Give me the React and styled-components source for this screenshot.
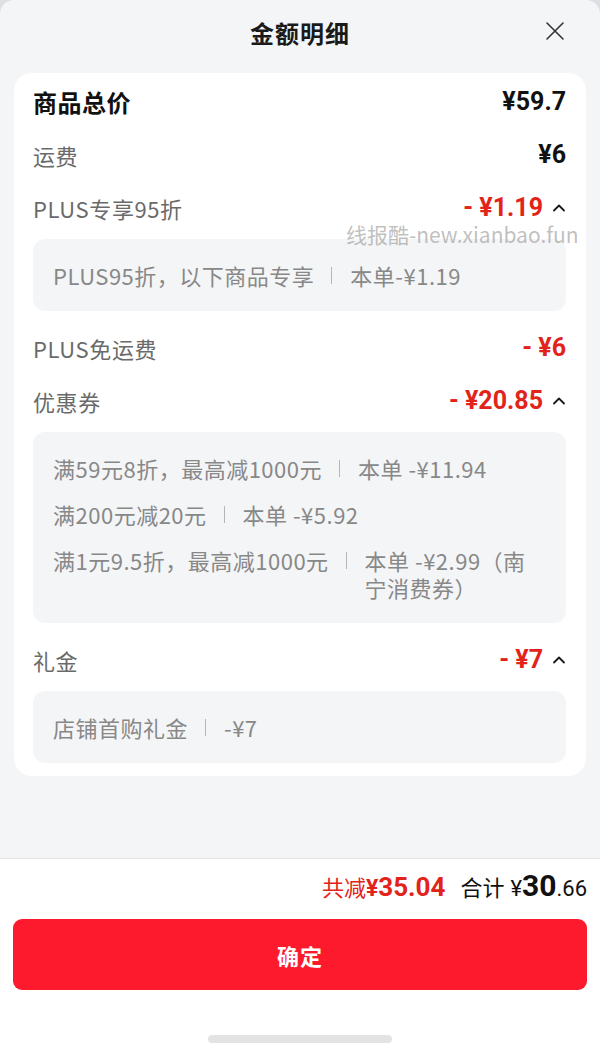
import React from "react";
import styled, { createGlobalStyle } from "styled-components";

const GlobalStyle = createGlobalStyle`
  html, body {
    margin: 0;
    padding: 0;
    background: #dedfe3;
  }
  * {
    box-sizing: border-box;
  }
`;

const CN = `"Noto Sans CJK SC", "Noto Sans", sans-serif`;
const NUM = `Roboto, "Noto Sans CJK SC", sans-serif`;

const Sheet = styled.div`
  width: 600px;
  height: 1053px;
  display: flex;
  flex-direction: column;
  background: #f4f5f7;
  border-radius: 14px 14px 0 0;
  overflow: hidden;
  font-family: ${CN};
`;

const Header = styled.div`
  position: relative;
  height: 64px;
  display: flex;
  align-items: center;
  justify-content: center;
  flex-shrink: 0;
`;

const Title = styled.div`
  font-size: 24px;
  font-weight: 700;
  color: #1a1a1a;
  letter-spacing: 1px;
`;

const Close = styled.button`
  position: absolute;
  right: 34px;
  top: 20px;
  width: 22px;
  height: 22px;
  padding: 0;
  border: none;
  background: none;
  cursor: pointer;
`;

const Body = styled.div`
  flex: 1;
  padding: 9px 14px 0;
`;

const Card = styled.div`
  position: relative;
  background: #fff;
  border-radius: 18px;
  padding: 2px 20px 13px 19px;
`;

const Row = styled.div`
  height: 53px;
  display: flex;
  align-items: center;
  justify-content: space-between;
`;

const Label = styled.span`
  font-size: ${(p) => (p.$main ? "24px" : "22px")};
  font-weight: ${(p) => (p.$main ? 700 : 400)};
  letter-spacing: ${(p) => (p.$main ? "0.5px" : "0.6px")};
  color: ${(p) => (p.$main ? "#111" : "#6a6a6a")};
`;

const Amount = styled.span`
  display: flex;
  align-items: center;
  gap: 9px;
  font-family: ${NUM};
  font-size: 25px;
  line-height: 25px;
  font-weight: 700;
  color: ${(p) => (p.$red ? "#e2231a" : "#111")};
`;

const Detail = styled.div`
  background: #f4f5f7;
  border-radius: 12px;
  margin: 5px 0 10px;
  padding: 23px 26px 22px 20px;
  display: flex;
  flex-direction: column;
  gap: 19px;
  &:last-child {
    margin-bottom: 0;
  }
`;

const Item = styled.div`
  display: flex;
  align-items: flex-start;
  font-size: 22px;
  line-height: 27px;
  letter-spacing: 0.5px;
  color: #888;
`;

const ItemName = styled.span`
  white-space: nowrap;
`;

const Sep = styled.span`
  flex-shrink: 0;
  width: 1px;
  height: 17px;
  margin: 5px 18px 0 17px;
  background: #b5b5b5;
`;

const ItemValue = styled.span`
  flex: 1;
`;

const Watermark = styled.div`
  position: absolute;
  left: 332px;
  top: 150px;
  font-family: ${CN};
  font-size: 21px;
  line-height: 22px;
  color: rgba(150, 150, 150, 0.6);
  pointer-events: none;
  white-space: nowrap;
`;

const Footer = styled.div`
  flex-shrink: 0;
  height: 195px;
  background: #fff;
  border-top: 1px solid #e6e6e6;
  display: flex;
  flex-direction: column;
  align-items: stretch;
  padding: 9px 13px 10px;
`;

const Summary = styled.div`
  display: flex;
  justify-content: flex-end;
  align-items: baseline;
  gap: 15px;
  height: 36px;
`;

const Saved = styled.span`
  color: #e2231a;
  font-size: 22px;
  & i {
    font-style: normal;
    font-family: ${NUM};
    font-size: 23px;
    font-weight: 700;
  }
  & b {
    font-family: ${NUM};
    font-size: 26px;
    font-weight: 700;
  }
`;

const Total = styled.span`
  color: #111;
  font-size: 22px;
  & i {
    font-style: normal;
    font-family: ${NUM};
    font-size: 22px;
    margin-left: 6px;
  }
  & b {
    font-family: ${NUM};
    font-size: 30px;
    font-weight: 700;
  }
  & small {
    font-family: ${NUM};
    font-size: 22px;
  }
`;

const Confirm = styled.button`
  margin-top: 15px;
  height: 71px;
  border: none;
  border-radius: 9px;
  background: #fd1a2d;
  color: #fff;
  font-family: ${CN};
  font-size: 22px;
  font-weight: 700;
  letter-spacing: 1px;
  cursor: pointer;
`;

const Indicator = styled.div`
  align-self: center;
  margin-top: auto;
  width: 184px;
  height: 8px;
  border-radius: 4px;
  background: #e3e3e3;
`;

const Chevron = () => (
  <svg width="14" height="9" viewBox="0 0 14 9">
    <polyline points="2,7.5 7,2.5 12,7.5" fill="none" stroke="#1a1a1a" strokeWidth="1.8" strokeLinecap="round" strokeLinejoin="round" />
  </svg>
);

const CloseIcon = () => (
  <svg width="22" height="22" viewBox="0 0 22 22">
    <path d="M3 3 L19 19 M19 3 L3 19" stroke="#333" strokeWidth="1.6" strokeLinecap="round" />
  </svg>
);

const DetailBox = ({ items }) => (
  <Detail>
    {items.map(([name, value]) => (
      <Item key={name}>
        <ItemName>{name}</ItemName>
        <Sep />
        <ItemValue>{value}</ItemValue>
      </Item>
    ))}
  </Detail>
);

export default function App() {
  return (
    <>
      <GlobalStyle />
      <Sheet>
        <Header>
          <Title>金额明细</Title>
          <Close aria-label="close">
            <CloseIcon />
          </Close>
        </Header>
        <Body>
          <Card>
            <Watermark>线报酷-new.xianbao.fun</Watermark>
            <Row>
              <Label $main>商品总价</Label>
              <Amount>¥59.7</Amount>
            </Row>
            <Row>
              <Label>运费</Label>
              <Amount>¥6</Amount>
            </Row>
            <Row>
              <Label>PLUS专享95折</Label>
              <Amount $red>
                - ¥1.19
                <Chevron />
              </Amount>
            </Row>
            <DetailBox items={[["PLUS95折，以下商品专享", "本单-¥1.19"]]} />
            <Row>
              <Label>PLUS免运费</Label>
              <Amount $red>- ¥6</Amount>
            </Row>
            <Row>
              <Label>优惠券</Label>
              <Amount $red>
                - ¥20.85
                <Chevron />
              </Amount>
            </Row>
            <DetailBox
              items={[
                ["满59元8折，最高减1000元", "本单 -¥11.94"],
                ["满200元减20元", "本单 -¥5.92"],
                ["满1元9.5折，最高减1000元", "本单 -¥2.99（南宁消费券）"],
              ]}
            />
            <Row>
              <Label>礼金</Label>
              <Amount $red>
                - ¥7
                <Chevron />
              </Amount>
            </Row>
            <DetailBox items={[["店铺首购礼金", "-¥7"]]} />
          </Card>
        </Body>
        <Footer>
          <Summary>
            <Saved>
              共减<i>¥</i>
              <b>35.04</b>
            </Saved>
            <Total>
              合计<i>¥</i>
              <b>30</b>
              <small>.66</small>
            </Total>
          </Summary>
          <Confirm>确定</Confirm>
          <Indicator />
        </Footer>
      </Sheet>
    </>
  );
}
